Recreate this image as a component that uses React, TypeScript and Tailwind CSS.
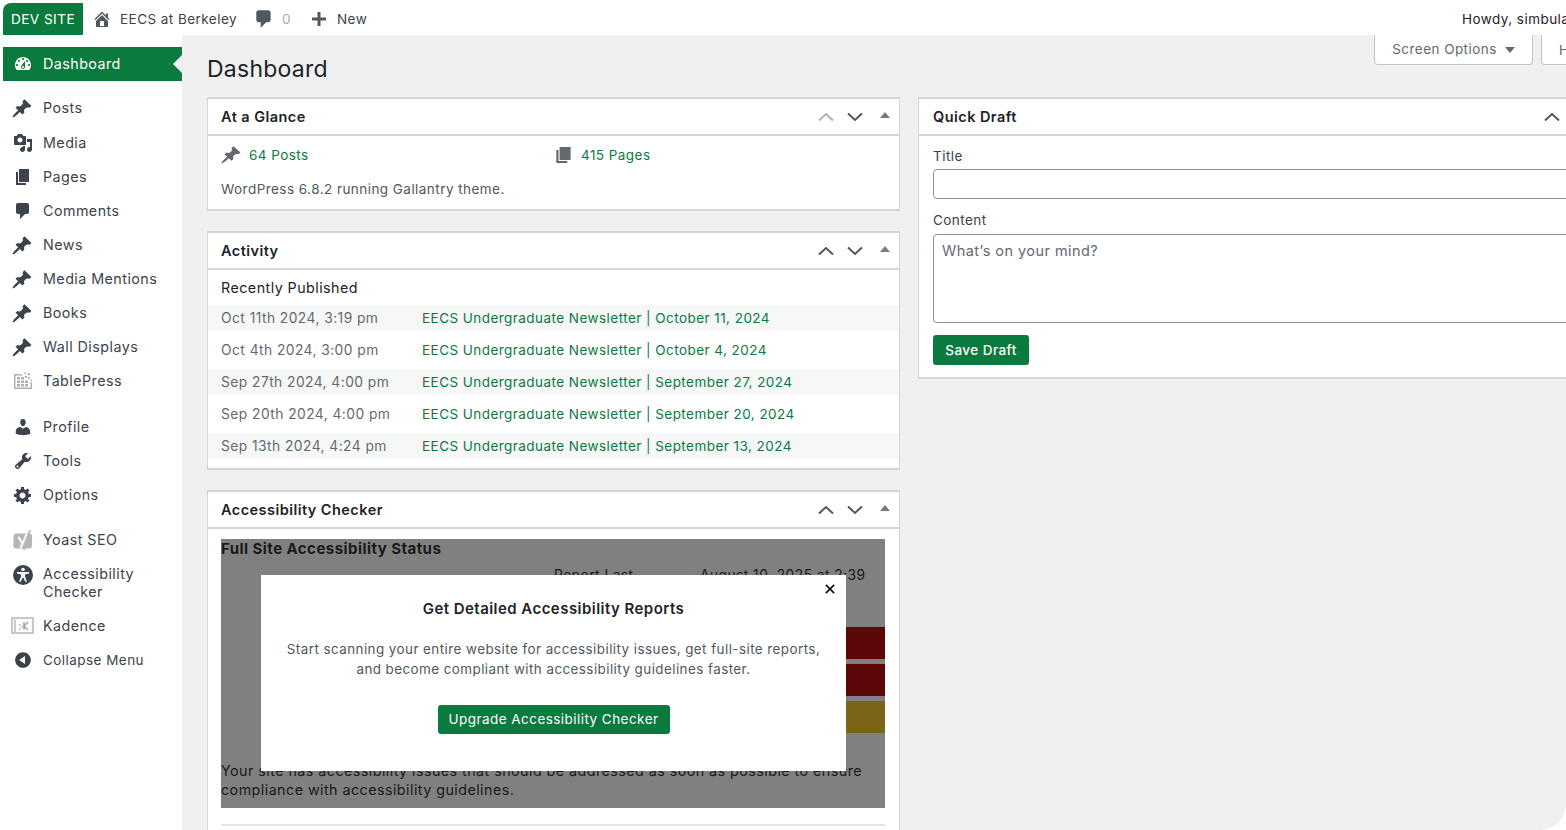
import type { ReactNode } from "react";

const ICONS: Record<string, string> = {
  dashboard:
    "M3.76 16h12.48c1.1-1.37 1.76-3.11 1.76-5 0-4.42-3.58-8-8-8s-8 3.58-8 8c0 1.89.66 3.63 1.76 5zM10 4c.55 0 1 .45 1 1s-.45 1-1 1-1-.45-1-1 .45-1 1-1zM6 6c.55 0 1 .45 1 1s-.45 1-1 1-1-.45-1-1 .45-1 1-1zm8 0c.55 0 1 .45 1 1s-.45 1-1 1-1-.45-1-1 .45-1 1-1zm-5.37 5.55L12 7v6c0 1.1-.9 2-2 2s-2-.9-2-2c0-.57.24-1.08.63-1.45zM4 10c.55 0 1 .45 1 1s-.45 1-1 1-1-.45-1-1 .45-1 1-1zm12 0c.55 0 1 .45 1 1s-.45 1-1 1-1-.45-1-1 .45-1 1-1zm-5 3c0-.55-.45-1-1-1s-1 .45-1 1 .45 1 1 1 1-.45 1-1z",
  pin: "M10.44 3.02l1.82-1.82 6.36 6.35-1.83 1.82c-1.05-.68-2.48-.57-3.41.36l-.75.75c-.92.93-1.04 2.35-.35 3.41l-1.83 1.82-2.41-2.41-2.8 2.79c-.42.42-3.38 2.71-3.8 2.29s1.86-3.39 2.28-3.81l2.79-2.79L4.1 9.36l1.83-1.82c1.05.69 2.48.57 3.41-.36l.75-.75c.93-.92 1.04-2.35.35-3.41z",
  media:
    "M13 11V4c0-.55-.45-1-1-1h-1.67L9 1H5L3.67 3H2c-.55 0-1 .45-1 1v7c0 .55.45 1 1 1h10c.55 0 1-.45 1-1zM7 4.5c1.38 0 2.5 1.12 2.5 2.5S8.38 9.5 7 9.5 4.5 8.38 4.5 7 5.62 4.5 7 4.5zM14 6h5v10.5c0 1.38-1.12 2.5-2.5 2.5S14 17.88 14 16.5s1.12-2.5 2.5-2.5c.17 0 .34.02.5.05V9h-3V6zm-4 8.05V13h2v3.5c0 1.38-1.12 2.5-2.5 2.5S7 17.88 7 16.5 8.12 14 9.5 14c.17 0 .34.02.5.05z",
  page: "M6 15V2h10v13H6zm-1 1h8v2H3V5h2v11z",
  comment: "M5 2h9c1.1 0 2 .9 2 2v7c0 1.1-.9 2-2 2h-2l-5 5v-5H5c-1.1 0-2-.9-2-2V4c0-1.1.9-2 2-2z",
  user: "M10 9.25c-2.27 0-2.73-3.44-2.73-3.44C7 4.02 7.82 2 9.97 2c2.16 0 2.98 2.02 2.71 3.81 0 0-.41 3.44-2.68 3.44zm0 2.57L12.72 10c2.39 0 4.52 2.33 4.52 4.53v2.49s-3.65 1.13-7.24 1.13c-3.65 0-7.24-1.13-7.24-1.13v-2.49c0-2.25 1.94-4.48 4.47-4.48z",
  tools:
    "M16.68 9.77c-1.34 1.34-3.3 1.67-4.95.99l-5.41 6.52c-.99.99-2.59.99-3.58 0s-.99-2.59 0-3.57l6.52-5.42c-.68-1.65-.35-3.61.99-4.95 1.28-1.28 3.12-1.62 4.72-1.06l-2.89 2.89 2.82 2.82 2.86-2.87c.53 1.58.18 3.39-1.08 4.65zM3.81 16.21c.4.39 1.04.39 1.43 0 .4-.4.4-1.04 0-1.43-.39-.4-1.03-.4-1.43 0-.39.39-.39 1.03 0 1.43z",
  gear: "M18 12h-2.18c-.17.7-.44 1.35-.81 1.93l1.54 1.54-2.1 2.1-1.54-1.54c-.58.36-1.23.63-1.91.79V19H8v-2.18c-.68-.16-1.33-.43-1.91-.79l-1.54 1.54-2.12-2.12 1.54-1.54c-.36-.58-.63-1.23-.79-1.91H1V9.03h2.17c.16-.7.44-1.35.8-1.94L2.43 5.55l2.1-2.1 1.54 1.54c.58-.37 1.24-.64 1.93-.81V2h3v2.18c.68.16 1.33.43 1.91.79l1.54-1.54 2.12 2.12-1.54 1.54c.36.59.64 1.24.8 1.94H18V12zm-8.5 1.5c1.66 0 3-1.34 3-3s-1.34-3-3-3-3 1.34-3 3 1.34 3 3 3z",
  collapse: "M10 2.16c4.33 0 7.84 3.51 7.84 7.84s-3.51 7.84-7.84 7.84S2.16 14.33 2.16 10 5.71 2.16 10 2.16zm2 11.72V6.12L6.18 9.97z",
  home: "M16 8.5l1.53 1.53-1.06 1.06L10 4.62l-6.47 6.47-1.06-1.06L10 2.5l4 4v-2h2v4zm-6-2.46l6 5.99V18H4v-5.97zM12 17v-5H8v5h4z",
  plus: "M17 8.500v3h-5.500V17h-3v-5.500H3v-3h5.500V3h3v5.500z",
};

function Dash({ name, className }: { name: string; className: string }) {
  return (
    <svg viewBox="0 0 20 20" preserveAspectRatio="none" className={className} fill="currentColor">
      <path fillRule="evenodd" d={ICONS[name]} />
    </svg>
  );
}

function TablePressIcon() {
  return (
    <svg viewBox="0 0 20 20" className="w-5 h-5 text-[#aeb1b4]" fill="currentColor">
      <path d="M1 3h8v1.500H2.500v12h15V11H19v7H1z" />
      <path d="M4 6h3v2.500H4zM8 6h3v2.500H8zM4 9.500h3V12H4zM8 9.500h3V12H8zM12 9.500h3V12h-3zM4 13h3v2.500H4zM8 13h3v2.500H8zM12 13h3v2.500h-3z" />
      <path d="M12 5h2v2h-2zM15 2h2v2h-2zM15 6h2v2h-2zM17.500 8.500h1.500v1.500h-1.500zM11.500 1.500h1.500v1.500h-1.500z" />
    </svg>
  );
}

function YoastIcon() {
  return (
    <svg viewBox="0 0 20 20" className="w-5 h-5">
      <rect x="0.500" y="3.500" width="18.500" height="15" rx="3" fill="#b4b7ba" />
      <path d="M17 0 L11 20" stroke="#b4b7ba" strokeWidth="1.800" />
      <path d="M5.500 7 L9.500 14 L13.500 4 M9.500 14 L7.500 18" stroke="#fff" strokeWidth="2" fill="none" />
    </svg>
  );
}

function A11yIcon() {
  return (
    <svg viewBox="0 0 20 20" className="w-5 h-5 text-[#3c434a]">
      <circle cx="10" cy="10" r="10" fill="currentColor" />
      <circle cx="10" cy="4.500" r="1.800" fill="#fff" />
      <path d="M4 7 H16 V8.600 L12 9.600 V11.500 L13.900 16.500 L12.400 17 L10.300 12.500 H9.700 L7.600 17 L6.100 16.500 L8 11.500 V9.600 L4 8.600 Z" fill="#fff" />
    </svg>
  );
}

function KadenceIcon() {
  return (
    <svg viewBox="0 0 24 20" className="w-6 h-5 -ml-0.5">
      <rect x="1" y="2" width="21" height="15" fill="#fff" stroke="#b4b7ba" strokeWidth="1.500" />
      <path d="M3 3.500h2v13H3z" fill="#c9cbcd" />
      <path d="M13 6v8M17 6l-4 4 4 4" stroke="#a0a4a8" strokeWidth="1.500" fill="none" />
      <path d="M8 8h2v1.500H8zM10 10h2v1.500h-2zM8 12h2v1.500H8z" fill="#c0c3c6" />
    </svg>
  );
}

const pinIcon = <Dash name="pin" className="w-[22px] h-[21px] -ml-[2px]" />;

const MENU: { label: ReactNode; icon: ReactNode; gap?: string; tall?: boolean }[] = [
  { label: "Posts", icon: pinIcon, gap: "mt-[10px] mb-[1px]" },
  { label: "Media", icon: <Dash name="media" className="w-5 h-5" /> },
  { label: "Pages", icon: <Dash name="page" className="w-5 h-5" /> },
  { label: "Comments", icon: <Dash name="comment" className="w-5 h-5" /> },
  { label: "News", icon: pinIcon },
  { label: "Media Mentions", icon: pinIcon },
  { label: "Books", icon: pinIcon },
  { label: "Wall Displays", icon: pinIcon },
  { label: "TablePress", icon: <TablePressIcon /> },
  { label: "Profile", icon: <Dash name="user" className="w-5 h-5" />, gap: "mt-[12px]" },
  { label: "Tools", icon: <Dash name="tools" className="w-5 h-5" /> },
  { label: "Options", icon: <Dash name="gear" className="w-5 h-5" /> },
  { label: "Yoast SEO", icon: <YoastIcon />, gap: "mt-[11px]" },
  { label: "Accessibility Checker", icon: <A11yIcon />, tall: true },
  { label: "Kadence", icon: <KadenceIcon /> },
];

const ACTIVITY = [
  ["Oct 11th 2024, 3:19 pm", "EECS Undergraduate Newsletter | October 11, 2024"],
  ["Oct 4th 2024, 3:00 pm", "EECS Undergraduate Newsletter | October 4, 2024"],
  ["Sep 27th 2024, 4:00 pm", "EECS Undergraduate Newsletter | September 27, 2024"],
  ["Sep 20th 2024, 4:00 pm", "EECS Undergraduate Newsletter | September 20, 2024"],
  ["Sep 13th 2024, 4:24 pm", "EECS Undergraduate Newsletter | September 13, 2024"],
];

function Chevron({ dir, className }: { dir: "up" | "down"; className: string }) {
  return (
    <svg viewBox="0 0 16 10" className={`w-4 h-[10px] ${className}`} fill="none" stroke="currentColor" strokeWidth="2">
      <path d={dir === "up" ? "M1 8.500 L8 2 L15 8.500" : "M1 1.500 L8 8 L15 1.500"} />
    </svg>
  );
}

function BoxHeader({ title, upLight }: { title: string; upLight?: boolean }) {
  return (
    <div className="h-[37px] flex items-center pl-[13px] pr-[9px] border-b-2 border-[#d4d5d7]">
      <h2 className="text-[14.5px] font-semibold text-[#1d2327]">{title}</h2>
      <div className="ml-auto flex items-center">
        <Chevron dir="up" className={upLight ? "text-[#b0b3b6]" : "text-[#50575e]"} />
        <Chevron dir="down" className="text-[#50575e] ml-[13px]" />
        <span className="ml-[17px] mb-1 w-0 h-0 border-x-[5px] border-x-transparent border-b-[6px] border-b-[#787c82]" />
      </div>
    </div>
  );
}

function AtAGlance() {
  return (
    <section className="bg-white border-2 border-[#d4d5d7] border-x-[1.5px]">
      <BoxHeader title="At a Glance" upLight />
      <div className="px-[13px] pt-[7px] pb-[10px] text-[13.500px] text-[#50575e]">
        <div className="flex items-center h-[24px]">
          <div className="w-[334px] flex items-center gap-[7px] text-[#0b7a40]">
            <Dash name="pin" className="w-[22px] h-5 -ml-px text-[#646970]" />
            64 Posts
          </div>
          <div className="flex items-center gap-[6px] text-[#0b7a40]">
            <Dash name="page" className="w-[22px] h-5 -ml-[2px] text-[#646970]" />
            415 Pages
          </div>
        </div>
        <p className="mt-[12px] h-[20px] leading-[20px]">WordPress 6.8.2 running Gallantry theme.</p>
      </div>
    </section>
  );
}

function Activity() {
  return (
    <section className="bg-white border-2 border-[#d4d5d7] border-x-[1.5px] pb-[9px]">
      <BoxHeader title="Activity" />
      <h3 className="pl-[13px] pt-[8px] h-[35px] leading-[20px] text-[14.3px] text-[#1d2327]">Recently Published</h3>
      {ACTIVITY.map(([date, title], i) => (
        <div
          key={date}
          className={`h-[26px] flex items-center pl-[13px] ${i > 0 ? "mt-[6px]" : ""} ${i % 2 === 0 ? "bg-[#f6f7f7]" : ""}`}
        >
          <span className="w-[201px] shrink-0 text-[13.800px] text-[#646970]">{date}</span>
          <span className="text-[13.500px] text-[#0b7a40]">{title}</span>
        </div>
      ))}
    </section>
  );
}

function AccessibilityChecker() {
  return (
    <section className="bg-white border-2 border-b-0 border-[#d4d5d7] border-x-[1.5px]">
      <BoxHeader title="Accessibility Checker" />
      <div className="pl-[13px] pr-[14px] pt-[10px]">
        <div className="relative h-[269px] bg-[#808080] text-[14.3px] text-[#1a1a1a]">
          <div className="font-bold text-[15px] leading-[20px]">Full Site Accessibility Status</div>
          <div className="flex mt-[6px] h-[20px] leading-[20px] text-[13.8px]">
            <span className="ml-[333px] w-[146px]">Report Last</span>
            <span>August 10, 2025 at 2:39</span>
          </div>
          <div className="mt-[42px] flex flex-col items-end gap-[5px]">
            <div className="w-[60px] h-[32px] bg-[#5c0808]" />
            <div className="w-[60px] h-[32px] bg-[#5c0808]" />
            <div className="w-[60px] h-[32px] bg-[#7a6516]" />
          </div>
          <p className="mt-[28px] leading-[19px] pr-[20px]">
            Your site has accessibility issues that should be addressed as soon as possible to ensure compliance with accessibility guidelines.
          </p>
          <div className="absolute left-[40px] top-[36px] w-[585px] h-[196px] bg-white flex flex-col items-center">
            <svg viewBox="0 0 12 12" className="absolute right-[11px] top-[9px] w-[10px] h-[10px] text-[#111]" stroke="currentColor" strokeWidth="2">
              <path d="M1 1 L11 11 M11 1 L1 11" />
            </svg>
            <h3 className="mt-[24px] text-[15px] leading-[20px] font-semibold text-[#1d2327]">Get Detailed Accessibility Reports</h3>
            <p className="mt-[20px] text-center text-[13.4px] leading-[20px] text-[#50575e] w-[540px]">
              Start scanning your entire website for accessibility issues, get full-site reports, and become compliant with accessibility guidelines faster.
            </p>
            <button className="mt-[26px] w-[232px] h-[29px] rounded-[3px] bg-[#0a7a3e] text-white text-[13.5px]">
              Upgrade Accessibility Checker
            </button>
          </div>
        </div>
        <div className="mt-[16px] border-t-2 border-[#e4e5e6] h-[8px]" />
      </div>
    </section>
  );
}

function QuickDraft() {
  return (
    <section className="bg-white border-2 border-[#d4d5d7] border-x-[1.5px] w-[800px] shrink-0">
      <div className="h-[37px] flex items-center pl-[14px] border-b-2 border-[#d4d5d7]">
        <h2 className="w-[611px] text-[14.5px] font-semibold text-[#1d2327]">Quick Draft</h2>
        <Chevron dir="up" className="text-[#50575e]" />
      </div>
      <div className="px-[14px] pt-[10px] pb-[12px] text-[13.500px] text-[#3c434a]">
        <label className="block h-[20px] leading-[20px]">Title</label>
        <div className="mt-[3px] h-[30px] border border-[#8c8f94] rounded-[4px]" />
        <label className="block mt-[11px] h-[20px] leading-[20px]">Content</label>
        <div className="mt-[4px] h-[89px] border border-[#8c8f94] rounded-[4px] px-[8px] py-[6px] text-[14.5px] leading-[20px] text-[#646970]">
          What’s on your mind?
        </div>
        <button className="mt-[12px] w-[96px] h-[30px] rounded-[3px] bg-[#0a7a3e] text-white font-medium">Save Draft</button>
      </div>
    </section>
  );
}

export default function App() {
  return (
    <div className="w-[1566px] h-[830px] overflow-hidden bg-white flex flex-col font-['Inter',sans-serif] tracking-[0.45px]">
      {/* admin bar */}
      <header className="h-[35px] shrink-0 pt-[3px] pl-[3px] flex items-center text-[13.500px] text-[#3c434a]">
        <div className="w-[80px] h-[32px] bg-[#0a7a3e] rounded-tl-[8px] flex items-center justify-center text-white text-[13.6px]">
          DEV SITE
        </div>
        <Dash name="home" className="ml-[9px] w-[20px] h-[20px] text-[#50575e]" />
        <span className="ml-[8px]">EECS at Berkeley</span>
        <Dash name="comment" className="ml-[16px] w-[22px] h-[22px] text-[#50575e]" />
        <span className="ml-[7px] text-[#a7aaad]">0</span>
        <Dash name="plus" className="ml-[18px] w-[20px] h-[20px] text-[#50575e]" />
        <span className="ml-[8px]">New</span>
        <span className="ml-auto w-[104px] shrink-0 whitespace-nowrap overflow-hidden text-[#1d2327]">Howdy, simbulation</span>
      </header>

      <div className="flex flex-1 min-h-0">
        {/* sidebar */}
        <aside className="w-[182px] shrink-0 pl-[3px] pt-[12px] text-[14.3px] text-[#3c434a]">
          <div className="relative h-[34px] bg-[#0a7a3e] text-white flex items-center pl-[10px]">
            <Dash name="dashboard" className="w-5 h-5" />
            <span className="ml-[10px]">Dashboard</span>
            <span className="absolute right-0 top-[8px] w-0 h-0 border-y-[9px] border-y-transparent border-r-[9px] border-r-[#f0f0f1]" />
          </div>
          {MENU.map((item, i) => (
            <div key={i} className={`flex pl-[10px] ${item.tall ? "py-[8px]" : "h-[34px] items-center"} ${item.gap ?? ""}`}>
              <span className="w-5 shrink-0">{item.icon}</span>
              <span className={`ml-[10px] ${item.tall ? "leading-[18px] w-[110px]" : ""}`}>{item.label}</span>
            </div>
          ))}
          <div className="flex items-center h-[34px] pl-[10px] text-[13.5px]">
            <Dash name="collapse" className="w-5 h-5" />
            <span className="ml-[10px]">Collapse Menu</span>
          </div>
        </aside>

        {/* content */}
        <main className="flex-1 min-w-0 bg-[#f0f0f1] rounded-br-[26px] overflow-hidden pl-[25px]">
          <div className="flex justify-end gap-[8px] h-[30px] text-[13.500px] text-[#646970]">
            <div className="w-[159px] h-[30px] bg-white border border-t-0 border-[#c3c4c7] rounded-b-[4px] flex items-center justify-center gap-[8px]">
              Screen Options
              <span className="w-0 h-0 border-x-[5px] border-x-transparent border-t-[6px] border-t-[#646970]" />
            </div>
            <div className="w-[25px] h-[30px] bg-white border border-t-0 border-r-0 border-[#c3c4c7] rounded-bl-[4px] pl-[17px] overflow-hidden">
              <span className="leading-[30px]">Help</span>
            </div>
          </div>
          <h1 className="h-[33px] -mt-[12px] mb-[11px] text-[23px] leading-[33px] tracking-[0.25px] text-[#1d2327]">Dashboard</h1>
          <div className="flex gap-[18px] items-start">
            <div className="w-[693px] shrink-0 flex flex-col gap-[20px]">
              <AtAGlance />
              <Activity />
              <AccessibilityChecker />
            </div>
            <QuickDraft />
          </div>
        </main>
      </div>
    </div>
  );
}
